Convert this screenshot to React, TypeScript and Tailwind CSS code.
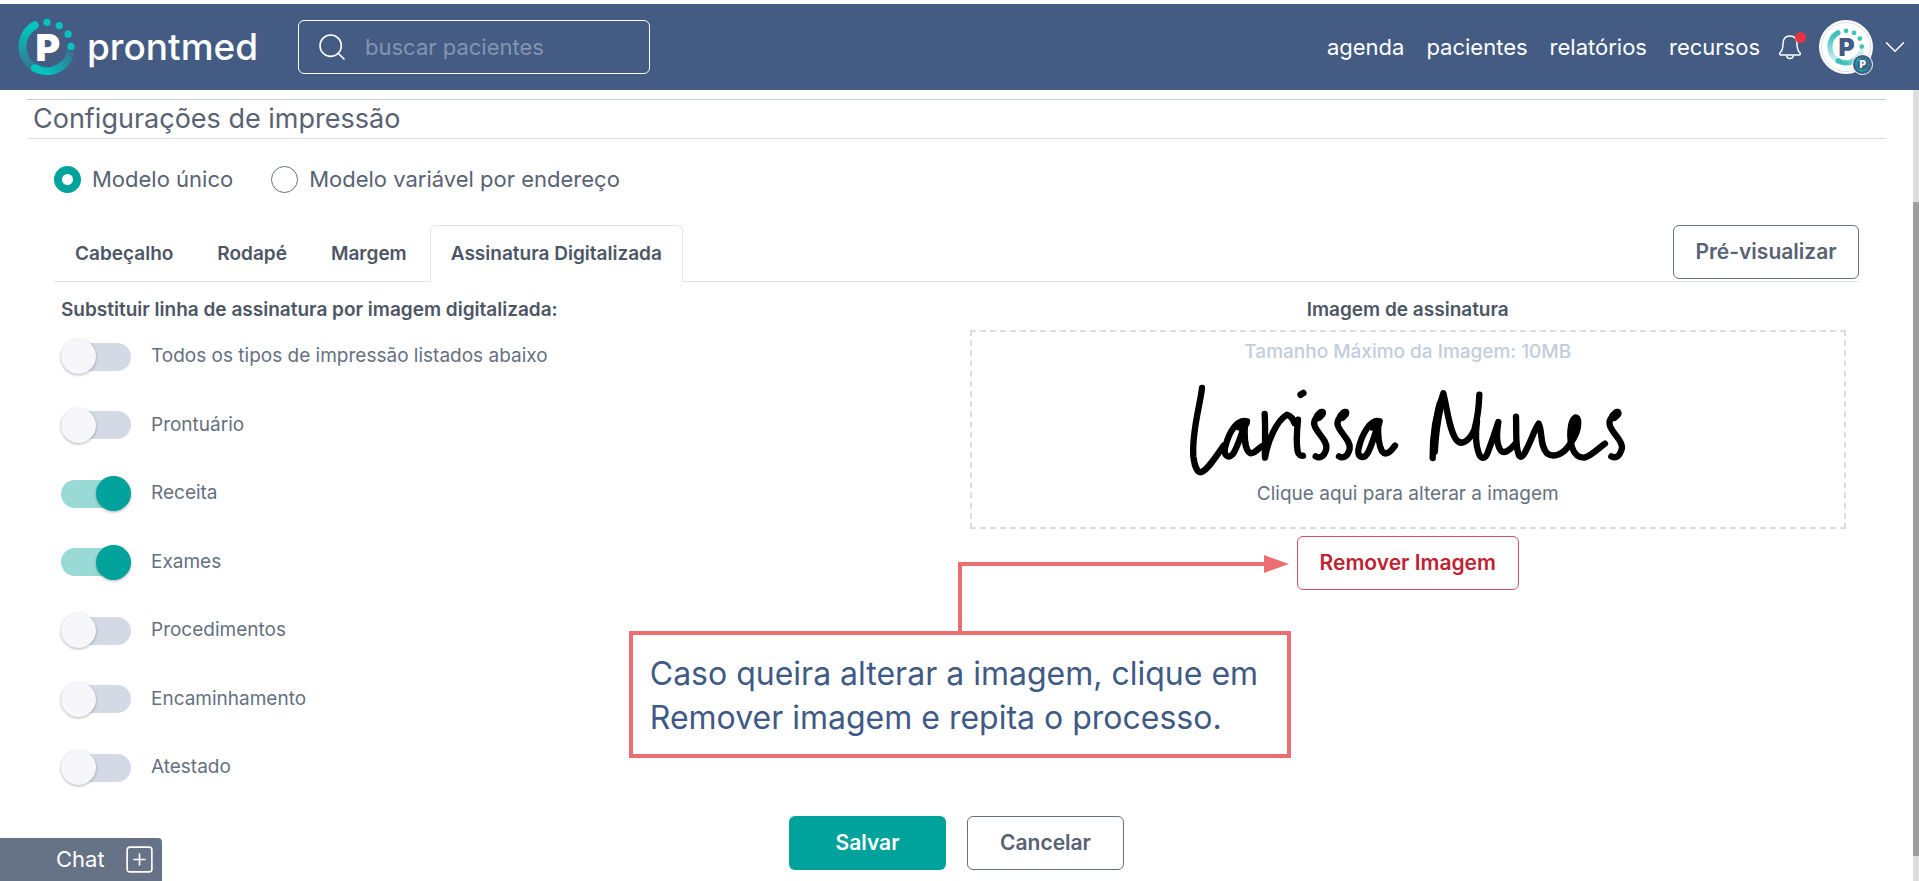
import { useState } from "react";
import { ChevronDown, Search, SquarePlus } from "lucide-react";
import clsx from "clsx";

interface LogoMarkProps {
  id: string;
  size: string;
  ring: string;
  letter: string;
}

function LogoMark({ id, size, ring, letter }: LogoMarkProps) {
  return (
    <svg viewBox="0 0 176 176" className={size} aria-hidden="true">
      <defs>
        <linearGradient id={`${id}-left`} x1="0" y1="0" x2="0" y2="1">
          <stop offset="0.1" stopColor={ring} />
          <stop offset="1" stopColor={ring} stopOpacity="0.25" />
        </linearGradient>
        <linearGradient id={`${id}-bottom`} x1="0" y1="1" x2="1" y2="0">
          <stop offset="0.1" stopColor={ring} />
          <stop offset="1" stopColor={ring} stopOpacity="0.1" />
        </linearGradient>
      </defs>
      <path d="M51 22 A75 75 0 0 0 51 152" fill="none" stroke={`url(#${id}-left)`} strokeWidth="24" strokeLinecap="round" />
      <path d="M51 152 A75 75 0 0 0 162 90" fill="none" stroke={`url(#${id}-bottom)`} strokeWidth="24" />
      <circle cx="51" cy="152" r="12" fill={ring} />
      <circle cx="88" cy="13" r="11" fill={ring} />
      <circle cx="125" cy="23" r="11" fill={ring} />
      <circle cx="152" cy="49" r="11" fill={ring} />
      <circle cx="161" cy="86" r="11" fill={ring} />
      <text x="53" y="131" fontSize="114" fontWeight="900" fill={letter}>P</text>
    </svg>
  );
}

const links = ["agenda", "pacientes", "relatórios", "recursos"];

function Header() {
  return (
    <header className="mt-1 h-[86px] bg-[#445c84] flex items-center justify-between pl-[18px] pr-[7px] text-white">
      <div className="flex items-center">
        <a href="#inicio" className="flex items-center gap-[11px]">
          <LogoMark id="brand" size="size-[58px]" ring="#00c4bd" letter="#ffffff" />
          <span className="w-[168px] text-[37px] leading-10 font-medium">prontmed</span>
        </a>
        <label className="ml-[43px] w-[352px] h-[54px] flex items-center gap-[17px] px-[17px] border border-white rounded-md">
          <Search className="size-8 shrink-0" strokeWidth={1.2} />
          <input
            type="text"
            aria-label="buscar pacientes"
            placeholder="buscar pacientes"
            className="min-w-0 w-full bg-transparent outline-none text-[22px] placeholder:text-[#8494b1]"
          />
        </label>
      </div>
      <div className="flex items-center">
        <nav className="flex gap-[22px] text-[22px]">
          {links.map((link) => (
            <a key={link} href={`#${link}`}>{link}</a>
          ))}
        </nav>
        <button type="button" aria-label="Notificações" className="relative ml-[18px] mr-[17px]">
          <svg viewBox="0 0 24 26" className="w-6 h-[26px]" fill="none" stroke="currentColor" strokeWidth="1.5" strokeLinejoin="round">
            <path d="M12 2 C7 2 5 5.500 5 10 C5 15 4 17 1.800 19 C1.300 20.500 2 21 3 21 L21 21 C22 21 22.700 20.500 22.200 19 C20 17 19 15 19 10 C19 5.500 17 2 12 2 Z" />
            <path d="M8.500 21.500 C9 25.500 15 25.500 15.500 21.500" />
          </svg>
          <span className="absolute -top-[2px] -right-1 size-[11px] rounded-full bg-[#e5343d]" />
        </button>
        <button type="button" aria-label="Minha conta" className="flex items-center gap-[5px]">
          <span className="relative size-[54px] rounded-full bg-white flex items-center justify-center">
            <span className="absolute inset-[2px] rounded-full border border-[#d9dfe8]" />
            <LogoMark id="avatar" size="size-[38px]" ring="#3fc1bb" letter="#445c84" />
            <span className="absolute -bottom-[1px] right-0 size-[21px] rounded-full border border-white bg-[#445c84] flex items-center justify-center">
              <LogoMark id="badge" size="size-[15px]" ring="#00b5b0" letter="#ffffff" />
            </span>
          </span>
          <ChevronDown className="size-[34px]" strokeWidth={1.1} />
        </button>
      </div>
    </header>
  );
}

interface ModelOptionProps {
  label: string;
  checked: boolean;
  onChange: () => void;
}

function ModelOption({ label, checked, onChange }: ModelOptionProps) {
  return (
    <label className="flex items-center gap-[11px] text-[22px] leading-[27px]">
      <input
        type="radio"
        name="modelo"
        checked={checked}
        onChange={onChange}
        className="appearance-none size-[27px] rounded-full border border-[#667085] bg-white checked:border-[8px] checked:border-[#00a39c]"
      />
      {label}
    </label>
  );
}

interface ToggleProps {
  label: string;
  checked: boolean;
  onChange: () => void;
}

function Toggle({ label, checked, onChange }: ToggleProps) {
  return (
    <label className="flex items-center gap-5 h-[35px] text-[19px] text-[#667080]">
      <span className="relative w-[70px] h-7 flex items-center">
        <input
          type="checkbox"
          checked={checked}
          onChange={onChange}
          className="appearance-none w-full h-full rounded-full bg-[#d3dae6] checked:bg-[#99dad7]"
        />
        <span
          className={clsx(
            "absolute size-[35px] rounded-full shadow-[0_1px_3px_rgba(0,0,0,0.3)] pointer-events-none",
            checked ? "right-0 bg-[#00a39c]" : "left-0 bg-[#f6f6fb]"
          )}
        />
      </span>
      {label}
    </label>
  );
}

function Signature() {
  return (
    <svg
      viewBox="108 62 1326 282"
      className="w-[442px] h-[94px]"
      fill="none"
      stroke="#000"
      strokeWidth="19"
      strokeLinecap="round"
      strokeLinejoin="round"
      role="img"
      aria-label="Assinatura de Larissa Nunes"
    >
      <path d="M153 80 C146 140 122 210 127 285 C130 310 138 332 148 333 C168 330 195 285 218 253" />
      <path d="M288 180 C262 172 235 205 222 260 C218 285 235 295 248 275 C262 250 270 225 282 186 C280 215 278 245 290 268 C300 285 315 270 332 255" />
      <path d="M264 194 L282 186" strokeWidth="28" />
      <path d="M341 158 C344 200 341 250 342 289 C350 240 375 180 408 160 C425 165 428 178 430 186" />
      <path d="M441 175 C437 215 436 250 440 270 C442 282 450 284 456 283" />
      <path d="M449 100 L457 95" strokeWidth="20" />
      <path d="M515 152 C495 165 487 180 490 190 C495 215 530 235 526 262 C520 287 505 292 494 285" />
      <path d="M502 166 L511 156" strokeWidth="28" />
      <path d="M585 152 C565 165 557 180 560 190 C565 215 600 235 596 262 C590 287 575 292 564 285" />
      <path d="M572 166 L581 156" strokeWidth="28" />
      <path d="M686 180 C660 172 633 215 622 265 C620 290 640 295 652 272 C665 245 673 215 682 188 C680 220 683 250 693 270 C705 285 720 270 732 253" />
      <path d="M664 194 L680 186" strokeWidth="28" />
      <path d="M845 290 C844 220 857 150 877 96 C890 150 895 205 915 234 C930 255 955 240 970 205 C980 170 984 130 985 100" />
      <path d="M849 270 C851 230 857 180 868 130" strokeWidth="24" />
      <path d="M978 180 C974 210 974 250 983 275 C990 296 1003 292 1009 277 C1023 240 1033 210 1042 182 C1036 220 1035 250 1050 268 C1060 278 1075 268 1090 250" />
      <path d="M1095 166 C1097 210 1092 250 1103 280 C1108 292 1116 284 1121 275 C1140 240 1150 205 1163 187 C1176 215 1165 250 1188 276 C1212 293 1240 275 1257 248 C1272 228 1285 205 1281 176 C1277 160 1264 170 1260 195 C1253 240 1263 290 1300 289 C1320 285 1340 262 1362 247" />
      <path d="M1270 180 C1266 195 1264 210 1264 225" strokeWidth="26" />
      <path d="M1400 152 C1380 165 1373 180 1376 190 C1381 215 1415 235 1413 260 C1406 287 1395 292 1381 285" />
      <path d="M1388 166 L1398 156" strokeWidth="28" />
    </svg>
  );
}

function Callout() {
  return (
    <div className="absolute right-full top-[19px] mr-[6px] w-[662px] flex flex-col items-end">
      <svg viewBox="0 0 331 76" className="w-[331px] h-[76px] mr-[2px]" fill="none">
        <path d="M2 76 V9 H308" stroke="#ed6e70" strokeWidth="4" />
        <path d="M306 0 L331 9 L306 18 Z" fill="#ed6e70" />
      </svg>
      <p className="w-full border-4 border-[#ed6e70] bg-white px-[17px] pt-[17px] pb-[14px] text-[32px] leading-[44px] text-[#3f5a85]">
        Caso queira alterar a imagem, clique em
        <br />
        Remover imagem e repita o processo.
      </p>
    </div>
  );
}

const tabs = ["Cabeçalho", "Rodapé", "Margem", "Assinatura Digitalizada"];

const documents = [
  "Todos os tipos de impressão listados abaixo",
  "Prontuário",
  "Receita",
  "Exames",
  "Procedimentos",
  "Encaminhamento",
  "Atestado",
];

function App() {
  const [model, setModel] = useState("unico");
  const [tab, setTab] = useState("Assinatura Digitalizada");
  const [enabled, setEnabled] = useState(["Receita", "Exames"]);

  const toggle = (name: string) =>
    setEnabled((current) =>
      current.includes(name) ? current.filter((item) => item !== name) : [...current, name]
    );

  return (
    <div className="bg-white text-[#596273] font-['Inter','Liberation_Sans',sans-serif]">
      <Header />
      <main className="mr-[6px] px-[27px] pt-[9px]">
        <h1 className="border-y border-t-[#c5ced8] border-b-[#dcdcdc] px-[6px] text-[27px] leading-[38px]">
          Configurações de impressão
        </h1>
        <div className="px-[27px]">
          <div className="mt-[27px] flex gap-[38px]">
            <ModelOption label="Modelo único" checked={model === "unico"} onChange={() => setModel("unico")} />
            <ModelOption label="Modelo variável por endereço" checked={model === "variavel"} onChange={() => setModel("variavel")} />
          </div>

          <div className="mt-8 flex items-start justify-between border-b border-[#e3e3e3]">
            <div role="tablist" className="flex gap-[2px]">
              {tabs.map((name) => (
                <button
                  key={name}
                  type="button"
                  role="tab"
                  aria-selected={name === tab}
                  onClick={() => setTab(name)}
                  className={clsx(
                    "h-[57px] -mb-px px-5 pt-[2px] text-[19px] font-semibold text-[#4d5665] rounded-t-md border",
                    name === tab ? "border-[#e3e3e3] border-b-white bg-white" : "border-transparent"
                  )}
                >
                  {name}
                </button>
              ))}
            </div>
            <button type="button" className="h-[54px] w-[186px] rounded-md border border-[#667085] text-[21px] font-semibold">
              Pré-visualizar
            </button>
          </div>

          <div className="grid grid-cols-2">
            <section className="px-[7px] pt-[14px]">
              <h2 className="text-[19px] leading-7 font-semibold text-[#4d5665]">
                Substituir linha de assinatura por imagem digitalizada:
              </h2>
              <div className="mt-[15px] h-[446px] flex flex-col justify-between">
                {documents.map((name) => (
                  <Toggle key={name} label={name} checked={enabled.includes(name)} onChange={() => toggle(name)} />
                ))}
              </div>
            </section>

            <section className="px-[13px] pt-[14px] flex flex-col items-center">
              <h2 className="text-[19px] leading-7 font-semibold text-[#4d5665]">Imagem de assinatura</h2>
              <button
                type="button"
                className="mt-[6px] w-full h-[199px] border-2 border-dashed border-[#dcdcdc] flex flex-col items-center pt-[6px] text-[19px] leading-7"
              >
                <span className="font-medium text-[#c3ccdb]">Tamanho Máximo da Imagem: 10MB</span>
                <span className="mt-4 mb-1"><Signature /></span>
                <span className="text-[#667080]">Clique aqui para alterar a imagem</span>
              </button>
              <div className="relative mt-[7px]">
                <button type="button" className="h-[54px] w-[222px] rounded-md border border-[#d0545f] text-[21px] font-semibold text-[#bf2231]">
                  Remover Imagem
                </button>
                <Callout />
              </div>
            </section>
          </div>

          <div className="mt-[31px] pb-[11px] flex justify-center gap-[21px] text-[21px] font-semibold">
            <button type="submit" className="w-[157px] h-[54px] rounded-md bg-[#00a39c] text-white">Salvar</button>
            <button type="button" className="w-[157px] h-[54px] rounded-md border border-[#667085]">Cancelar</button>
          </div>
        </div>
      </main>

      <button type="button" className="fixed bottom-0 left-0 h-[43px] w-[162px] pl-14 pr-[6px] flex items-center justify-between bg-[#667285] text-white text-[22px] rounded-tr-sm">
        Chat
        <SquarePlus className="size-[33px]" strokeWidth={1.2} />
      </button>

      {/* scroll track */}
      <div className="fixed right-0 bottom-0 top-[90px] w-[6px] bg-[#dedede] pt-28 pb-[25px]">
        <div className="h-full bg-[#9e9e9e]" />
      </div>
    </div>
  );
}

export default App;
